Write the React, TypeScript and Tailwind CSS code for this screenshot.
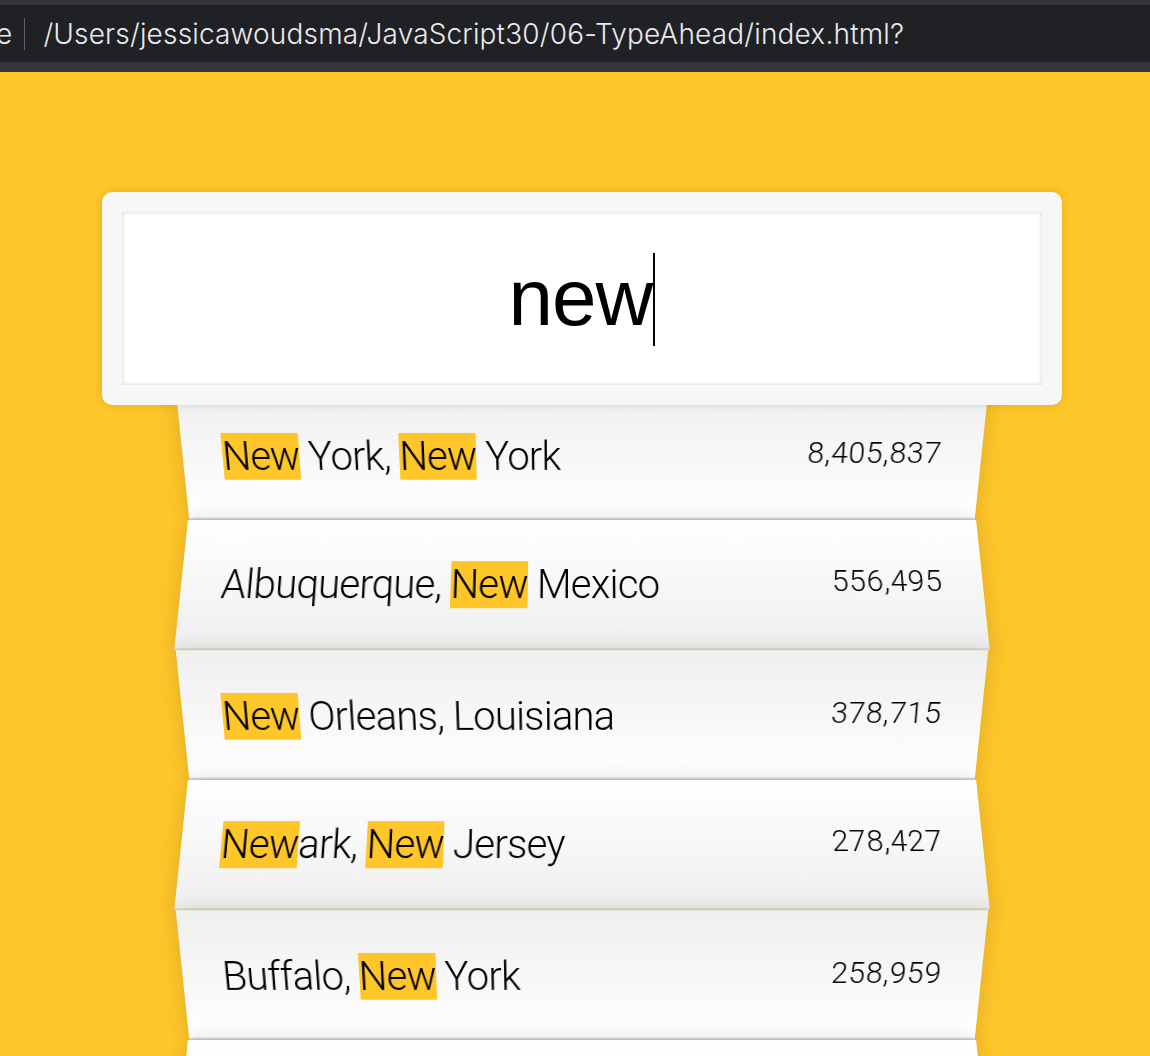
import React from "react";

const CITIES = [
  { name: "New York, New York", population: "8,405,837" },
  { name: "Albuquerque, New Mexico", population: "556,495" },
  { name: "New Orleans, Louisiana", population: "378,715" },
  { name: "Newark, New Jersey", population: "278,427" },
  { name: "Buffalo, New York", population: "258,959" },
  { name: "Jersey City, New Jersey", population: "257,342" },
];

const QUERY = "new";

function highlight(text: string) {
  const parts = text.split(new RegExp(`(${QUERY})`, "gi"));
  return parts.map((part, i) =>
    part.toLowerCase() === QUERY ? (
      <span key={i} className="bg-[#ffc629]">
        {part}
      </span>
    ) : (
      <React.Fragment key={i}>{part}</React.Fragment>
    )
  );
}

function BrowserBar() {
  return (
    <div className="h-[72px] bg-[#35363a] pt-[5px] pb-[10px]">
      <div className="h-full bg-[#202124] flex items-center text-[28px] text-[#e8eaed] font-['Inter',sans-serif] tracking-[0.17px]">
        <span className="-ml-[4px]">e</span>
        <span className="ml-[12px] w-px h-[32px] bg-[#5f6368]" />
        <span className="ml-[18px]">/Users/jessicawoudsma/JavaScript30/06-TypeAhead/index.html?</span>
      </div>
    </div>
  );
}

export default function App() {
  return (
    <div className="h-[1056px] bg-[#ffc629] font-['Roboto',sans-serif] font-light text-black overflow-hidden">
      <BrowserBar />

      <form className="w-[800px] ml-[182px] mt-[100px]">
        {/* search box */}
        <div className="relative z-[2] top-[20px] -ml-[80px] w-[960px] h-[213px] bg-white border-[20px] border-[#f7f7f7] rounded-[10px] shadow-[0_0_10px_rgba(0,0,0,0.12),inset_0_0_4px_rgba(0,0,0,0.19)] flex items-center justify-center">
          <span className="text-[80px] leading-[96px] font-normal font-['Liberation_Sans',sans-serif] tracking-[-1px] mt-[-2px]">
            new
          </span>
          <span className="ml-[1px] w-[2px] h-[93px] bg-black mt-[2px]" />
        </div>

        {/* suggestions */}
        <ul className="relative">
          {CITIES.map((city, i) => {
            const odd = i % 2 === 0;
            return (
              <li
                key={city.name}
                className={`flex justify-between p-[40px] border-b-2 border-[#d8d8d8] shadow-[0_0_20px_rgba(0,0,0,0.14)] ${
                  odd
                    ? "bg-linear-to-t from-white to-[#efefef] [transform:perspective(200px)_rotateX(-3deg)_translateY(6px)]"
                    : "bg-linear-to-b from-white to-[#efefef] [transform:perspective(200px)_rotateX(3deg)_translateY(4px)_scale(1.001)]"
                }`}
              >
                <span className="text-[40px] leading-[48px] tracking-[-0.75px] mt-[2px] -mb-[2px]">
                  {highlight(city.name)}
                </span>
                <span className="text-[30px] leading-[36px] mt-[4px] tracking-[0.7px]">{city.population}</span>
              </li>
            );
          })}
        </ul>
      </form>
    </div>
  );
}
